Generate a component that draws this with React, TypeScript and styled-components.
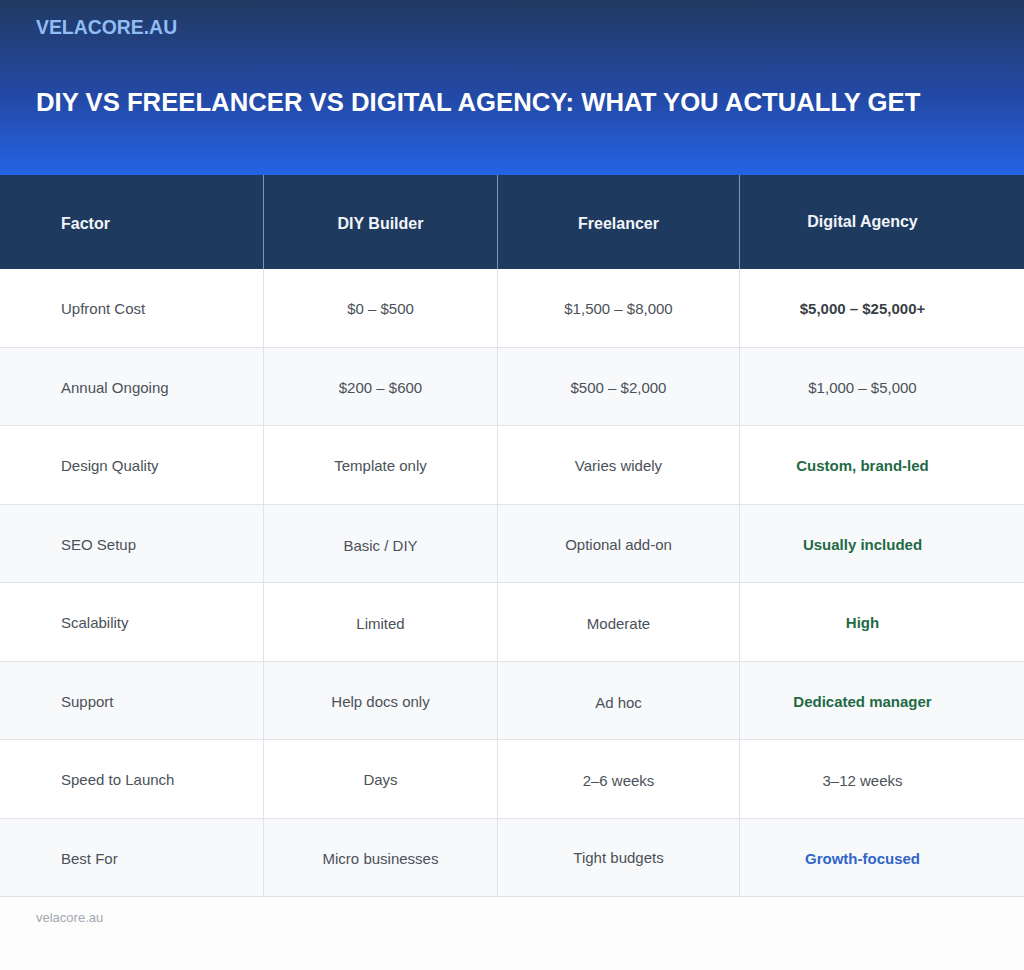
import React from "react";
import styled, { createGlobalStyle } from "styled-components";

const Global = createGlobalStyle`
  html, body { margin: 0; padding: 0; background: #fdfdfe; }
  body { font-family: "Liberation Sans", Arial, sans-serif; }
  * { box-sizing: border-box; }
`;

const Page = styled.div`
  width: 1024px;
  min-height: 970px;
  background: #fdfdfe;
  display: flex;
  flex-direction: column;
`;

const Hero = styled.header`
  height: 175px;
  background: linear-gradient(180deg, #213a62 0%, #2349a6 55%, #2563e4 100%);
  padding: 15px 36px 0 36px;
  display: flex;
  flex-direction: column;
`;

const Brand = styled.div`
  font-size: 19.4px;
  font-weight: 700;
  color: #90bdf5;
  line-height: 24px;
`;

const Title = styled.h1`
  margin: 48px 0 0 0;
  font-size: 25.7px;
  line-height: 30px;
  font-weight: 700;
  color: #ffffff;
`;

const Table = styled.div`
  display: grid;
  grid-template-columns: 263px 234px 242px 285px;
`;

const HeadCell = styled.div<{ $first?: boolean; $last?: boolean }>`
  height: 94px;
  background: #1f3a5f;
  color: #f1f4f9;
  font-size: 16px;
  font-weight: 700;
  display: flex;
  align-items: center;
  justify-content: ${(p) => (p.$first ? "flex-start" : "center")};
  padding-left: ${(p) => (p.$first ? "61px" : "0")};
  padding-right: ${(p) => (p.$last ? "39px" : "0")};
  padding-top: ${(p) => (p.$last ? "0" : "4px")};
  border-left: ${(p) => (p.$first ? "none" : "1px solid #7f95b2")};
`;

type Tone = "plain" | "strong" | "green" | "blue";

const toneColor: Record<Tone, string> = {
  plain: "#4b5159",
  strong: "#3a3f47",
  green: "#1f6a45",
  blue: "#2f66c8",
};

const Cell = styled.div<{ $first?: boolean; $last?: boolean; $alt?: boolean; $tone: Tone; $shift?: number }>`
  height: 78.5px;
  background: ${(p) => (p.$alt ? "#f8f9fb" : "#ffffff")};
  border-bottom: 1px solid #e1e3e8;
  border-left: ${(p) => (p.$first ? "none" : "1px solid #e1e3e8")};
  display: flex;
  align-items: center;
  justify-content: ${(p) => (p.$first ? "flex-start" : "center")};
  padding-left: ${(p) => (p.$first ? "61px" : "0")};
  padding-right: ${(p) => (p.$last ? "39px" : "0")};
  padding-top: ${(p) => `${2 + (p.$shift ?? 0) * 2}px`};
  font-size: 15px;
  font-weight: ${(p) => (p.$tone === "plain" ? 400 : 700)};
  color: ${(p) => toneColor[p.$tone]};
`;

const Footer = styled.footer`
  padding: 13px 36px 0 36px;
  font-size: 13px;
  line-height: 16px;
  color: #a3a7ae;
`;

type CellData = { text: string; tone?: Tone; shift?: number };

const rows: CellData[][] = [
  [{ text: "Upfront Cost" }, { text: "$0 – $500" }, { text: "$1,500 – $8,000" }, { text: "$5,000 – $25,000+", tone: "strong" }],
  [{ text: "Annual Ongoing" }, { text: "$200 – $600" }, { text: "$500 – $2,000" }, { text: "$1,000 – $5,000" }],
  [{ text: "Design Quality" }, { text: "Template only" }, { text: "Varies widely" }, { text: "Custom, brand-led", tone: "green" }],
  [{ text: "SEO Setup" }, { text: "Basic / DIY", shift: 1 }, { text: "Optional add-on" }, { text: "Usually included", tone: "green" }],
  [{ text: "Scalability" }, { text: "Limited", shift: 1 }, { text: "Moderate", shift: 1 }, { text: "High", tone: "green" }],
  [{ text: "Support" }, { text: "Help docs only" }, { text: "Ad hoc", shift: 1 }, { text: "Dedicated manager", tone: "green" }],
  [{ text: "Speed to Launch" }, { text: "Days" }, { text: "2–6 weeks", shift: 1 }, { text: "3–12 weeks", shift: 1 }],
  [{ text: "Best For" }, { text: "Micro businesses" }, { text: "Tight budgets", shift: -1 }, { text: "Growth-focused", tone: "blue" }],
];

const heads = ["Factor", "DIY Builder", "Freelancer", "Digital Agency"];

export default function App() {
  return (
    <Page>
      <Global />
      <Hero>
        <Brand>VELACORE.AU</Brand>
        <Title>DIY VS FREELANCER VS DIGITAL AGENCY: WHAT YOU ACTUALLY GET</Title>
      </Hero>
      <Table>
        {heads.map((h, i) => (
          <HeadCell key={h} $first={i === 0} $last={i === 3}>
            {h}
          </HeadCell>
        ))}
        {rows.map((row, r) =>
          row.map((c, i) => (
            <Cell
              key={`${r}-${i}`}
              $first={i === 0}
              $last={i === 3}
              $alt={r % 2 === 1}
              $tone={c.tone ?? "plain"}
              $shift={c.shift}
            >
              {c.text}
            </Cell>
          ))
        )}
      </Table>
      <Footer>velacore.au</Footer>
    </Page>
  );
}
